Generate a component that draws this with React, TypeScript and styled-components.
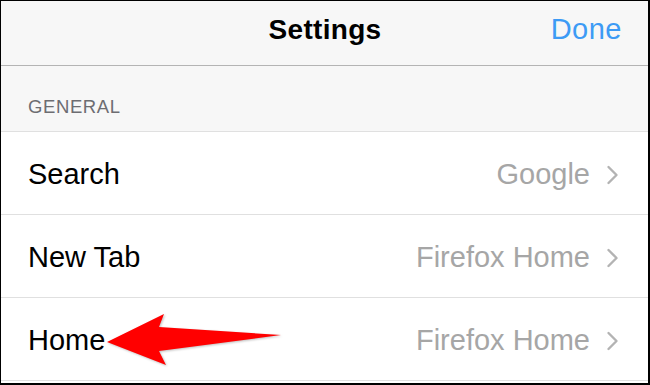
import styled, { createGlobalStyle } from 'styled-components'

const GlobalStyle = createGlobalStyle`
  html, body { margin: 0; padding: 0; background: #fff; }
  * { box-sizing: border-box; }
`

const Frame = styled.div`
  position: relative;
  width: 650px;
  height: 385px;
  border-style: solid;
  border-color: #000;
  border-width: 1px 2px 2px 1px;
  background: #fff;
  font-family: "Liberation Sans", Arial, sans-serif;
  overflow: hidden;
`

const NavBar = styled.header`
  height: 65px;
  background: #f7f7f7;
  border-bottom: 1px solid #b4b4b4;
  display: grid;
  grid-template-columns: 1fr auto 1fr;
  align-items: center;
  padding: 0 26px 7px 27px;
`

const Title = styled.h1`
  grid-column: 2;
  margin: 0;
  font-size: 28px;
  font-weight: 700;
  letter-spacing: 0.3px;
  color: #000;
`

const DoneButton = styled.button`
  justify-self: end;
  border: none;
  background: none;
  padding: 0;
  font-family: inherit;
  font-size: 29px;
  letter-spacing: 0.5px;
  color: #3d9bf5;
`

const SectionHeader = styled.div`
  height: 66px;
  background: #f7f7f7;
  border-bottom: 1px solid #e0e0e0;
  display: flex;
  align-items: flex-end;
  padding: 0 27px 13px;
  font-size: 18.5px;
  letter-spacing: 0.6px;
  color: #6d6d72;
`

const Row = styled.div`
  height: 83px;
  border-bottom: 1px solid #e0e0e0;
  display: flex;
  align-items: center;
  padding: 3px 29px 0 27px;
`

const Label = styled.span`
  flex: 1;
  font-size: 29px;
  color: #000;
`

const Value = styled.span`
  font-size: 29px;
  color: #a6a6a6;
  margin-right: 16px;
`

const Chevron = () => (
  <svg width="13" height="20" viewBox="0 0 13 20">
    <polyline points="2.5,2 10.5,10 2.5,18" fill="none" stroke="#b3b3b3" strokeWidth="2.4" strokeLinecap="round" strokeLinejoin="round" />
  </svg>
)

const Arrow = styled.svg`
  position: absolute;
  left: 0;
  top: 0;
  pointer-events: none;
  filter: drop-shadow(1px 1px 1px rgba(0, 0, 0, 0.25));
`

const rows = [
  { label: 'Search', value: 'Google' },
  { label: 'New Tab', value: 'Firefox Home' },
  { label: 'Home', value: 'Firefox Home' }
]

export default function App () {
  return (
    <Frame>
      <GlobalStyle />
      <NavBar>
        <Title>Settings</Title>
        <DoneButton>Done</DoneButton>
      </NavBar>
      <SectionHeader>GENERAL</SectionHeader>
      {rows.map(r => (
        <Row key={r.label}>
          <Label>{r.label}</Label>
          <Value>{r.value}</Value>
          <Chevron />
        </Row>
      ))}
      <Arrow width="650" height="385" viewBox="0 0 650 385">
        <polygon points="106,341 163,313 158,326 280,334 158,350 165,364" fill="#ff0000" />
      </Arrow>
    </Frame>
  )
}
